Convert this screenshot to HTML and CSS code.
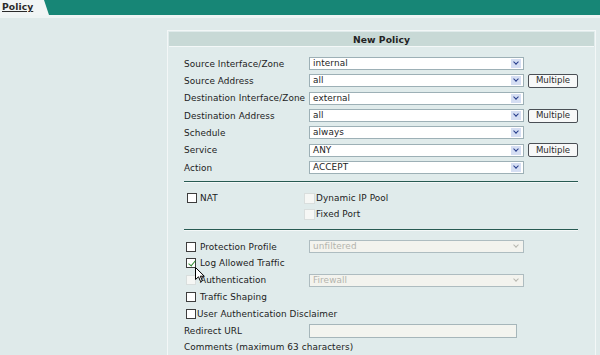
FILE: index.html
```html
<!DOCTYPE html>
<html lang="en">
  <head>
    <meta charset="UTF-8" />
    <title>Policy</title>
    <link rel="stylesheet" href="styles.css">
  </head>
  <body>
    <!-- Tab bar -->
    <div class="tabbar">
      <div class="tab"><a href="#">Policy</a></div>
      <div class="bar"></div>
    </div>
    <div class="strip"></div>

    <main class="page">
      <section class="panel">
        <h2 class="panel-title">New Policy</h2>

        <div class="form">
          <!-- Main settings -->
          <div class="rows">
            <div class="row">
              <span class="label">Source Interface/Zone</span>
              <div class="select"><span>internal</span><i class="arrow"></i></div>
            </div>
            <div class="row">
              <span class="label">Source Address</span>
              <div class="select"><span>all</span><i class="arrow"></i></div>
              <button class="btn">Multiple</button>
            </div>
            <div class="row">
              <span class="label">Destination Interface/Zone</span>
              <div class="select"><span>external</span><i class="arrow"></i></div>
            </div>
            <div class="row">
              <span class="label">Destination Address</span>
              <div class="select"><span>all</span><i class="arrow"></i></div>
              <button class="btn">Multiple</button>
            </div>
            <div class="row">
              <span class="label">Schedule</span>
              <div class="select"><span>always</span><i class="arrow"></i></div>
            </div>
            <div class="row">
              <span class="label">Service</span>
              <div class="select"><span>ANY</span><i class="arrow"></i></div>
              <button class="btn">Multiple</button>
            </div>
            <div class="row">
              <span class="label">Action</span>
              <div class="select"><span>ACCEPT</span><i class="arrow"></i></div>
            </div>
          </div>

          <hr class="divider" />

          <!-- NAT -->
          <div class="nat">
            <label class="check nat-main"><i class="box"></i>NAT</label>
            <div class="nat-opts">
              <label class="check disabled"><i class="box"></i>Dynamic IP Pool</label>
              <label class="check disabled"><i class="box"></i>Fixed Port</label>
            </div>
          </div>

          <hr class="divider second" />

          <!-- Options -->
          <div class="opts">
            <div class="opt">
              <label class="check"><i class="box"></i>Protection Profile</label>
              <div class="select off"><span>unfiltered</span><i class="arrow"></i></div>
            </div>
            <div class="opt">
              <label class="check"><i class="box checked"></i>Log Allowed Traffic</label>
            </div>
            <div class="opt">
              <label class="check"><i class="box dim"></i>Authentication</label>
              <div class="select off"><span>Firewall</span><i class="arrow"></i></div>
            </div>
            <div class="opt">
              <label class="check"><i class="box"></i>Traffic Shaping</label>
            </div>
            <div class="opt">
              <label class="check tight"><i class="box"></i>User Authentication Disclaimer</label>
            </div>
            <div class="opt">
              <span class="label">Redirect URL</span>
              <input class="text off" type="text" />
            </div>
            <div class="opt">
              <span class="label">Comments (maximum 63 characters)</span>
            </div>
          </div>
        </div>

        <!-- mouse pointer -->
        <svg class="cursor" width="11" height="16" viewBox="0 0 11 16">
          <path d="M0.5 0.5 L0.5 12.5 L3.5 9.8 L5.6 14.6 L7.4 13.8 L5.3 9.2 L9.3 9.2 Z" fill="#fff" stroke="#000" stroke-width="1" />
        </svg>
      </section>
    </main>
  </body>
</html>
```

FILE: styles.css
```css
/* Global Styles */
html {
  height: 355px;
  overflow: hidden;
}

body {
  margin: 0;
  height: 355px;
  overflow: hidden;
  background: #dfeaea;
  font-family: "DejaVu Sans", Verdana, sans-serif;
  font-size: 8.9px;
  letter-spacing: 0.08px;
  color: #1c1c1c;
}

/* Tab bar */
.tabbar {
  display: flex;
  height: 15px;
  background: #f1f5f5;
}

.tab {
  width: 42px;
  padding-left: 2px;
  line-height: 14px;
}

.tab a {
  color: #2a2a2a;
  font-weight: bold;
  font-size: 9.2px;
  text-decoration: underline;
}

.bar {
  flex: 1;
  background: #178676;
  clip-path: polygon(0 0, 100% 0, 100% 100%, 5px 100%);
}

.strip {
  height: 3px;
  background: #eef4f4;
}

/* Panel */
.page {
  padding: 12px 0 0 167px;
}

.panel {
  position: relative;
  width: 425px;
  height: 330px;
  border: 1px solid #f3f7f7;
  border-bottom: none;
  padding: 1px;
  background: #e0ebeb;
}

.panel-title {
  margin: 0;
  height: 14px;
  line-height: 15px;
  background: #c8d9d6;
  border-bottom: 1px solid #f4f8f8;
  text-align: center;
  font-size: 9.2px;
  font-weight: bold;
  color: #232323;
}

.form {
  padding: 8px 16px 0 15px;
}

.row {
  display: flex;
  align-items: center;
  height: 17.33px;
}

.label {
  width: 125px;
  flex-shrink: 0;
  white-space: nowrap;
}

/* Fake select boxes */
.select {
  position: relative;
  box-sizing: border-box;
  width: 215px;
  height: 13px;
  border: 1px solid #9db0b6;
  background: #fff;
  padding-left: 3px;
  line-height: 11px;
}

.arrow {
  position: absolute;
  right: 2px;
  top: 1px;
  width: 10px;
  height: 9px;
  background: #d5def3;
}

.arrow::after {
  content: "";
  position: absolute;
  left: 3px;
  top: 1px;
  width: 3px;
  height: 3px;
  border-right: 1.5px solid #233a8a;
  border-bottom: 1.5px solid #233a8a;
  transform: rotate(45deg);
}

.select.off {
  background: #f3f3ee;
  border-color: #aebcc0;
  color: #b3b3ad;
}

.select.off .arrow {
  background: transparent;
}

.select.off .arrow::after {
  border-color: #b8b8b0;
  border-width: 1px;
}

.btn {
  box-sizing: border-box;
  margin-left: 4px;
  width: 50px;
  height: 14px;
  padding: 0;
  border: 1px solid #4a4f55;
  border-radius: 2px;
  background: #f7f8f8;
  font-family: inherit;
  font-size: 8.6px;
  color: #2a2a2a;
  line-height: 11px;
}

/* Dividers */
.divider {
  margin: 5px 0 0 0;
  height: 1px;
  border: none;
  background: #285a52;
  box-shadow: 0 1px 0 #f4f8f8;
}

.divider.second {
  margin-top: 7px;
}

/* Checkboxes */
.check {
  display: flex;
  align-items: center;
  white-space: nowrap;
}

.box {
  position: relative;
  flex-shrink: 0;
  box-sizing: border-box;
  width: 10px;
  height: 10px;
  margin-right: 4px;
  border: 1px solid #3d3d3d;
  background: #fff;
}

.box.checked::after {
  content: "";
  position: absolute;
  left: 2.5px;
  top: 0;
  width: 3px;
  height: 6px;
  border-right: 1.6px solid #2f8a2f;
  border-bottom: 1.6px solid #2f8a2f;
  transform: rotate(40deg);
}

.box.dim,
.check.disabled .box {
  border-color: #d9dedd;
  background: #f6f7f5;
}

.check.tight .box {
  margin-right: 1px;
}

.nat {
  display: flex;
  margin-top: 8px;
}

.nat-main {
  width: 117px;
  height: 16px;
  padding-left: 3px;
  align-self: flex-start;
}

.nat-main .box {
  margin-right: 3px;
}

.nat-opts .check {
  height: 16px;
}

.nat-opts .box {
  width: 11px;
  height: 11px;
  margin-right: 1px;
}

/* Options */
.opts {
  margin-top: 8px;
}

.opt {
  display: flex;
  align-items: center;
  height: 16.8px;
}

.opt .check {
  min-width: 123px;
  padding-left: 2px;
}

.text {
  box-sizing: border-box;
  width: 208px;
  height: 14px;
  margin: 0;
  border: 1px solid #a6b6ba;
}

.text.off {
  background: #f3f4ef;
}

.cursor {
  position: absolute;
  left: 27px;
  top: 236px;
}
```
